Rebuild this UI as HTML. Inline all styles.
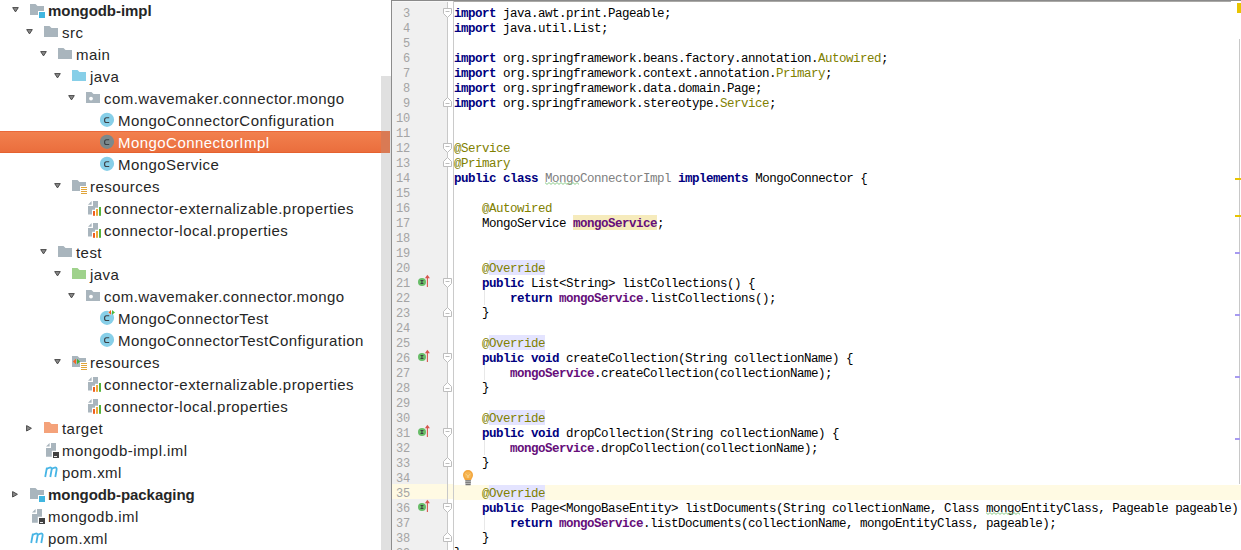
<!DOCTYPE html>
<html><head><meta charset="utf-8"><style>
html,body{margin:0;padding:0;width:1241px;height:550px;overflow:hidden;background:#fff;position:relative}
.tt{position:absolute;font-family:"Liberation Sans",sans-serif;font-size:15px;letter-spacing:0.45px;line-height:22px;height:22px;white-space:nowrap}
.sel{position:absolute;left:0;width:390px;height:22px;background:linear-gradient(#f2814f,#ea6d3c);box-shadow:inset 0 1px 0 #e9683a, inset 0 -1px 0 #e5622f}
.sb{position:absolute;left:381px;top:76px;width:10px;height:474px;background:#e0e0e0}
.sbsel{position:absolute;left:381px;top:131px;width:9px;height:22px;background:#d97a54}
.vsep{position:absolute;left:391px;top:0;width:1px;height:550px;background:#8c8c8c}
.gut{position:absolute;left:392px;top:0;width:55px;height:550px;background:#f0f0f0}
.gline{position:absolute;left:447px;top:0;width:1px;height:550px;background:#c8c8c8}
.gedge{position:absolute;left:453px;top:0;width:1px;height:550px;background:#cacaca}
.topb{position:absolute;left:391px;top:0;width:850px;height:1px;background:#8a8a8a}
.topb2{position:absolute;left:454px;top:1px;width:777px;height:1px;background:#aaa9a6}
.topb3{position:absolute;left:392px;top:1px;width:61px;height:1px;background:#f8f8f8}
.ln{position:absolute;left:392px;width:18px;text-align:right;font-family:"Liberation Mono",monospace;font-size:12px;letter-spacing:-0.2px;line-height:15px;height:15px;color:#a4a4a4}
.cl{position:absolute;left:454px;white-space:pre;font-family:"Liberation Mono",monospace;font-size:12.5px;letter-spacing:-0.5px;line-height:15px;height:15px;color:#000}
.k{color:#000080;font-weight:bold}
.a{color:#808000}
.f{color:#660e7a;font-weight:bold}
.fh{}
.oh{}
.g{color:#808080}
.u{text-decoration:underline wavy #9cd39c;text-decoration-thickness:1px;text-underline-offset:1px}
.caret{position:absolute;left:454px;top:485px;width:787px;height:15px;background:#fffae3}
.caretg{position:absolute;left:392px;top:484px;width:61px;height:15px;background:#fffae3}
.guide{position:absolute;width:1px;background:#e8e8e8}
</style></head><body>
<svg style="position:absolute;left:12px;top:7px" width="8" height="7" viewBox="0 0 8 7"><path d="M0.7 0.6 H6.3 L3.5 4.9Z" fill="#8a8a8a" stroke="#4a4a4a" stroke-width="1" stroke-linejoin="round"/></svg><svg style="position:absolute;left:30px;top:4px" width="16" height="14" viewBox="0 0 16 14"><path d="M0 0 H5.5 L7.5 2 H14 V11 H0 Z" fill="#a9b5bd"/><rect x="8" y="7" width="8" height="8" fill="#fff"/><rect x="9" y="8" width="6" height="6" fill="#40b6e0"/></svg><div class="tt" style="left:48px;top:0px;color:#262626;font-weight:bold;letter-spacing:-0.05px">mongodb-impl</div><svg style="position:absolute;left:26px;top:29px" width="8" height="7" viewBox="0 0 8 7"><path d="M0.7 0.6 H6.3 L3.5 4.9Z" fill="#8a8a8a" stroke="#4a4a4a" stroke-width="1" stroke-linejoin="round"/></svg><svg style="position:absolute;left:44px;top:26px" width="16" height="14" viewBox="0 0 16 14"><path d="M0 0 H5.5 L7.5 2 H14 V11 H0 Z" fill="#a9b5bd"/></svg><div class="tt" style="left:62px;top:22px;color:#262626;font-weight:normal;">src</div><svg style="position:absolute;left:40px;top:51px" width="8" height="7" viewBox="0 0 8 7"><path d="M0.7 0.6 H6.3 L3.5 4.9Z" fill="#8a8a8a" stroke="#4a4a4a" stroke-width="1" stroke-linejoin="round"/></svg><svg style="position:absolute;left:58px;top:48px" width="16" height="14" viewBox="0 0 16 14"><path d="M0 0 H5.5 L7.5 2 H14 V11 H0 Z" fill="#a9b5bd"/></svg><div class="tt" style="left:76px;top:44px;color:#262626;font-weight:normal;">main</div><svg style="position:absolute;left:54px;top:73px" width="8" height="7" viewBox="0 0 8 7"><path d="M0.7 0.6 H6.3 L3.5 4.9Z" fill="#8a8a8a" stroke="#4a4a4a" stroke-width="1" stroke-linejoin="round"/></svg><svg style="position:absolute;left:72px;top:70px" width="16" height="14" viewBox="0 0 16 14"><path d="M0 0 H5.5 L7.5 2 H14 V11 H0 Z" fill="#87cfe8"/></svg><div class="tt" style="left:90px;top:66px;color:#262626;font-weight:normal;">java</div><svg style="position:absolute;left:68px;top:95px" width="8" height="7" viewBox="0 0 8 7"><path d="M0.7 0.6 H6.3 L3.5 4.9Z" fill="#8a8a8a" stroke="#4a4a4a" stroke-width="1" stroke-linejoin="round"/></svg><svg style="position:absolute;left:86px;top:92px" width="16" height="14" viewBox="0 0 16 14"><path d="M0 0 H5.5 L7.5 2 H14 V11 H0 Z" fill="#a9b5bd"/><circle cx="5" cy="6.6" r="1.9" fill="#fff"/></svg><div class="tt" style="left:104px;top:88px;color:#262626;font-weight:normal;">com.wavemaker.connector.mongo</div><svg style="position:absolute;left:100px;top:112px" width="16" height="16" viewBox="0 0 16 16"><circle cx="7" cy="7.8" r="7.1" fill="#87cfe8"/><path d="M9.2 5.7 H6.4 C5.1 5.7 4.6 6.3 4.6 7.8 V8.4 C4.6 9.9 5.1 10.5 6.4 10.5 H9.2" fill="none" stroke="#3a4046" stroke-width="1.15"/></svg><div class="tt" style="left:118px;top:110px;color:#262626;font-weight:normal;">MongoConnectorConfiguration</div><div class="sel" style="top:131px"></div><svg style="position:absolute;left:100px;top:134px" width="16" height="16" viewBox="0 0 16 16"><circle cx="7" cy="7.8" r="7.1" fill="#7c898c"/><path d="M9.2 5.7 H6.4 C5.1 5.7 4.6 6.3 4.6 7.8 V8.4 C4.6 9.9 5.1 10.5 6.4 10.5 H9.2" fill="none" stroke="#3a4046" stroke-width="1.15"/></svg><div class="tt" style="left:118px;top:132px;color:#fff;font-weight:normal;">MongoConnectorImpl</div><svg style="position:absolute;left:100px;top:156px" width="16" height="16" viewBox="0 0 16 16"><circle cx="7" cy="7.8" r="7.1" fill="#87cfe8"/><path d="M9.2 5.7 H6.4 C5.1 5.7 4.6 6.3 4.6 7.8 V8.4 C4.6 9.9 5.1 10.5 6.4 10.5 H9.2" fill="none" stroke="#3a4046" stroke-width="1.15"/></svg><div class="tt" style="left:118px;top:154px;color:#262626;font-weight:normal;">MongoService</div><svg style="position:absolute;left:54px;top:183px" width="8" height="7" viewBox="0 0 8 7"><path d="M0.7 0.6 H6.3 L3.5 4.9Z" fill="#8a8a8a" stroke="#4a4a4a" stroke-width="1" stroke-linejoin="round"/></svg><svg style="position:absolute;left:72px;top:180px" width="16" height="14" viewBox="0 0 16 14"><path d="M0 0 H5.5 L7.5 2 H14 V11 H0 Z" fill="#a9b5bd"/><rect x="8" y="6" width="8" height="8" fill="#fff"/><g fill="#e0a43a"><rect x="9" y="7" width="6" height="1"/><rect x="9" y="9" width="6" height="1"/><rect x="9" y="11" width="6" height="1"/><rect x="9" y="13" width="6" height="1"/></g></svg><div class="tt" style="left:90px;top:176px;color:#262626;font-weight:normal;">resources</div><svg style="position:absolute;left:86px;top:200px" width="16" height="16" viewBox="0 0 16 16"><path d="M2 4.7 L5.6 1 V4.7 Z" fill="#a9b5bd"/><path d="M7 1 H12 V7.8 H9 V9.8 H6 V14.6 H2 V6 H7 Z" fill="#a9b5bd"/><rect x="7" y="11" width="2" height="4.8" fill="#ee5e1e"/><rect x="10" y="9" width="2" height="6.8" fill="#efa939"/><rect x="13" y="7" width="2" height="8.8" fill="#55b33d"/></svg><div class="tt" style="left:104px;top:198px;color:#262626;font-weight:normal;">connector-externalizable.properties</div><svg style="position:absolute;left:86px;top:222px" width="16" height="16" viewBox="0 0 16 16"><path d="M2 4.7 L5.6 1 V4.7 Z" fill="#a9b5bd"/><path d="M7 1 H12 V7.8 H9 V9.8 H6 V14.6 H2 V6 H7 Z" fill="#a9b5bd"/><rect x="7" y="11" width="2" height="4.8" fill="#ee5e1e"/><rect x="10" y="9" width="2" height="6.8" fill="#efa939"/><rect x="13" y="7" width="2" height="8.8" fill="#55b33d"/></svg><div class="tt" style="left:104px;top:220px;color:#262626;font-weight:normal;">connector-local.properties</div><svg style="position:absolute;left:40px;top:249px" width="8" height="7" viewBox="0 0 8 7"><path d="M0.7 0.6 H6.3 L3.5 4.9Z" fill="#8a8a8a" stroke="#4a4a4a" stroke-width="1" stroke-linejoin="round"/></svg><svg style="position:absolute;left:58px;top:246px" width="16" height="14" viewBox="0 0 16 14"><path d="M0 0 H5.5 L7.5 2 H14 V11 H0 Z" fill="#a9b5bd"/></svg><div class="tt" style="left:76px;top:242px;color:#262626;font-weight:normal;">test</div><svg style="position:absolute;left:54px;top:271px" width="8" height="7" viewBox="0 0 8 7"><path d="M0.7 0.6 H6.3 L3.5 4.9Z" fill="#8a8a8a" stroke="#4a4a4a" stroke-width="1" stroke-linejoin="round"/></svg><svg style="position:absolute;left:72px;top:268px" width="16" height="14" viewBox="0 0 16 14"><path d="M0 0 H5.5 L7.5 2 H14 V11 H0 Z" fill="#9fd28c"/></svg><div class="tt" style="left:90px;top:264px;color:#262626;font-weight:normal;">java</div><svg style="position:absolute;left:68px;top:293px" width="8" height="7" viewBox="0 0 8 7"><path d="M0.7 0.6 H6.3 L3.5 4.9Z" fill="#8a8a8a" stroke="#4a4a4a" stroke-width="1" stroke-linejoin="round"/></svg><svg style="position:absolute;left:86px;top:290px" width="16" height="14" viewBox="0 0 16 14"><path d="M0 0 H5.5 L7.5 2 H14 V11 H0 Z" fill="#a9b5bd"/><circle cx="5" cy="6.6" r="1.9" fill="#fff"/></svg><div class="tt" style="left:104px;top:286px;color:#262626;font-weight:normal;">com.wavemaker.connector.mongo</div><svg style="position:absolute;left:100px;top:310px" width="16" height="16" viewBox="0 0 16 16"><circle cx="7" cy="7.8" r="7.1" fill="#87cfe8"/><path d="M9.2 5.7 H6.4 C5.1 5.7 4.6 6.3 4.6 7.8 V8.4 C4.6 9.9 5.1 10.5 6.4 10.5 H9.2" fill="none" stroke="#3a4046" stroke-width="1.15"/><path d="M11.3 -0.5 L7.6 2.4 L11.3 5.5Z" fill="#fff" opacity="0.7"/><path d="M11 0 L8.4 2.4 L11 4.8Z" fill="#ee5e1e"/><path d="M12 0 L15 2.4 L12 4.8Z" fill="#4db83a"/></svg><div class="tt" style="left:118px;top:308px;color:#262626;font-weight:normal;">MongoConnectorTest</div><svg style="position:absolute;left:100px;top:332px" width="16" height="16" viewBox="0 0 16 16"><circle cx="7" cy="7.8" r="7.1" fill="#87cfe8"/><path d="M9.2 5.7 H6.4 C5.1 5.7 4.6 6.3 4.6 7.8 V8.4 C4.6 9.9 5.1 10.5 6.4 10.5 H9.2" fill="none" stroke="#3a4046" stroke-width="1.15"/></svg><div class="tt" style="left:118px;top:330px;color:#262626;font-weight:normal;">MongoConnectorTestConfiguration</div><svg style="position:absolute;left:54px;top:359px" width="8" height="7" viewBox="0 0 8 7"><path d="M0.7 0.6 H6.3 L3.5 4.9Z" fill="#8a8a8a" stroke="#4a4a4a" stroke-width="1" stroke-linejoin="round"/></svg><svg style="position:absolute;left:72px;top:356px" width="16" height="14" viewBox="0 0 16 14"><path d="M0 0 H5.5 L7.5 2 H14 V11 H0 Z" fill="#a9b5bd"/><path d="M4 2.8 L0.9 5.5 L4 8.2Z" fill="#f26522"/><path d="M5 2.8 L8.1 5.5 L5 8.2Z" fill="#3cb034"/><rect x="8" y="6" width="8" height="8" fill="#fff"/><g fill="#e0a43a"><rect x="9" y="7" width="6" height="1"/><rect x="9" y="9" width="6" height="1"/><rect x="9" y="11" width="6" height="1"/><rect x="9" y="13" width="6" height="1"/></g></svg><div class="tt" style="left:90px;top:352px;color:#262626;font-weight:normal;">resources</div><svg style="position:absolute;left:86px;top:376px" width="16" height="16" viewBox="0 0 16 16"><path d="M2 4.7 L5.6 1 V4.7 Z" fill="#a9b5bd"/><path d="M7 1 H12 V7.8 H9 V9.8 H6 V14.6 H2 V6 H7 Z" fill="#a9b5bd"/><rect x="7" y="11" width="2" height="4.8" fill="#ee5e1e"/><rect x="10" y="9" width="2" height="6.8" fill="#efa939"/><rect x="13" y="7" width="2" height="8.8" fill="#55b33d"/></svg><div class="tt" style="left:104px;top:374px;color:#262626;font-weight:normal;">connector-externalizable.properties</div><svg style="position:absolute;left:86px;top:398px" width="16" height="16" viewBox="0 0 16 16"><path d="M2 4.7 L5.6 1 V4.7 Z" fill="#a9b5bd"/><path d="M7 1 H12 V7.8 H9 V9.8 H6 V14.6 H2 V6 H7 Z" fill="#a9b5bd"/><rect x="7" y="11" width="2" height="4.8" fill="#ee5e1e"/><rect x="10" y="9" width="2" height="6.8" fill="#efa939"/><rect x="13" y="7" width="2" height="8.8" fill="#55b33d"/></svg><div class="tt" style="left:104px;top:396px;color:#262626;font-weight:normal;">connector-local.properties</div><svg style="position:absolute;left:26px;top:425px" width="7" height="8" viewBox="0 0 7 8"><path d="M0.6 0.6 V6.0 L5.4 3.3Z" fill="#8a8a8a" stroke="#4a4a4a" stroke-width="1" stroke-linejoin="round"/></svg><svg style="position:absolute;left:44px;top:422px" width="16" height="14" viewBox="0 0 16 14"><path d="M0 0 H5.5 L7.5 2 H14 V11 H0 Z" fill="#f4a27a"/></svg><div class="tt" style="left:62px;top:418px;color:#262626;font-weight:normal;">target</div><svg style="position:absolute;left:44px;top:442px" width="16" height="16" viewBox="0 0 16 16"><path d="M2 4.6 L5.6 1 V4.6 Z" fill="#a9b5bd"/><path d="M7 1 H12 V8.8 H7.8 V14.8 H2 V6 H7 Z" fill="#a9b5bd"/><rect x="9" y="10" width="6" height="6" fill="#414141"/><rect x="10" y="14" width="3" height="1" fill="#e8e8e8"/></svg><div class="tt" style="left:62px;top:440px;color:#262626;font-weight:normal;">mongodb-impl.iml</div><svg style="position:absolute;left:40px;top:461px" width="22" height="22" viewBox="0 0 22 22"><path d="M5.2 16 L6.9 6.6 M6.6 8.3 C7.6 6.4 12.4 5.3 11.6 8.8 L10.3 16 M11.6 8.3 C12.6 6.4 17.4 5.3 16.6 8.8 L15.3 16" fill="none" stroke="#47b5e5" stroke-width="1.8"/></svg><div class="tt" style="left:62px;top:462px;color:#262626;font-weight:normal;">pom.xml</div><svg style="position:absolute;left:12px;top:491px" width="7" height="8" viewBox="0 0 7 8"><path d="M0.6 0.6 V6.0 L5.4 3.3Z" fill="#8a8a8a" stroke="#4a4a4a" stroke-width="1" stroke-linejoin="round"/></svg><svg style="position:absolute;left:30px;top:488px" width="16" height="14" viewBox="0 0 16 14"><path d="M0 0 H5.5 L7.5 2 H14 V11 H0 Z" fill="#a9b5bd"/><rect x="8" y="7" width="8" height="8" fill="#fff"/><rect x="9" y="8" width="6" height="6" fill="#40b6e0"/></svg><div class="tt" style="left:48px;top:484px;color:#262626;font-weight:bold;letter-spacing:-0.05px">mongodb-packaging</div><svg style="position:absolute;left:30px;top:508px" width="16" height="16" viewBox="0 0 16 16"><path d="M2 4.6 L5.6 1 V4.6 Z" fill="#a9b5bd"/><path d="M7 1 H12 V8.8 H7.8 V14.8 H2 V6 H7 Z" fill="#a9b5bd"/><rect x="9" y="10" width="6" height="6" fill="#414141"/><rect x="10" y="14" width="3" height="1" fill="#e8e8e8"/></svg><div class="tt" style="left:48px;top:506px;color:#262626;font-weight:normal;">mongodb.iml</div><svg style="position:absolute;left:26px;top:527px" width="22" height="22" viewBox="0 0 22 22"><path d="M5.2 16 L6.9 6.6 M6.6 8.3 C7.6 6.4 12.4 5.3 11.6 8.8 L10.3 16 M11.6 8.3 C12.6 6.4 17.4 5.3 16.6 8.8 L15.3 16" fill="none" stroke="#47b5e5" stroke-width="1.8"/></svg><div class="tt" style="left:48px;top:528px;color:#262626;font-weight:normal;">pom.xml</div>
<div class="sb"></div><div class="sbsel"></div>
<div class="gut"></div>
<div class="caret"></div><div class="caretg"></div>
<div class="vsep"></div>
<div class="gline"></div>
<div class="gedge"></div>
<div class="topb"></div><div class="topb2"></div><div class="topb3"></div>
<div class="ln" style="top:7px">3</div><div class="ln" style="top:22px">4</div><div class="ln" style="top:37px">5</div><div class="ln" style="top:52px">6</div><div class="ln" style="top:67px">7</div><div class="ln" style="top:82px">8</div><div class="ln" style="top:97px">9</div><div class="ln" style="top:112px">10</div><div class="ln" style="top:127px">11</div><div class="ln" style="top:142px">12</div><div class="ln" style="top:157px">13</div><div class="ln" style="top:172px">14</div><div class="ln" style="top:187px">15</div><div class="ln" style="top:202px">16</div><div class="ln" style="top:217px">17</div><div class="ln" style="top:232px">18</div><div class="ln" style="top:247px">19</div><div class="ln" style="top:262px">20</div><div class="ln" style="top:277px">21</div><div class="ln" style="top:292px">22</div><div class="ln" style="top:307px">23</div><div class="ln" style="top:322px">24</div><div class="ln" style="top:337px">25</div><div class="ln" style="top:352px">26</div><div class="ln" style="top:367px">27</div><div class="ln" style="top:382px">28</div><div class="ln" style="top:397px">29</div><div class="ln" style="top:412px">30</div><div class="ln" style="top:427px">31</div><div class="ln" style="top:442px">32</div><div class="ln" style="top:457px">33</div><div class="ln" style="top:472px">34</div><div class="ln" style="top:487px">35</div><div class="ln" style="top:502px">36</div><div class="ln" style="top:517px">37</div><div class="ln" style="top:532px">38</div><div class="ln" style="top:547px">39</div>
<svg style="position:absolute;left:443px;top:8px" width="10" height="11" viewBox="0 0 10 11"><path d="M0.5 0.5 H8.5 V5.5 L4.5 9.5 L0.5 5.5Z" fill="#fff" stroke="#bdbdbd"/><path d="M2.5 3.5 H6.5" stroke="#bdbdbd"/></svg><svg style="position:absolute;left:443px;top:143px" width="10" height="11" viewBox="0 0 10 11"><path d="M0.5 0.5 H8.5 V5.5 L4.5 9.5 L0.5 5.5Z" fill="#fff" stroke="#bdbdbd"/><path d="M2.5 3.5 H6.5" stroke="#bdbdbd"/></svg><svg style="position:absolute;left:443px;top:278px" width="10" height="11" viewBox="0 0 10 11"><path d="M0.5 0.5 H8.5 V5.5 L4.5 9.5 L0.5 5.5Z" fill="#fff" stroke="#bdbdbd"/><path d="M2.5 3.5 H6.5" stroke="#bdbdbd"/></svg><svg style="position:absolute;left:443px;top:353px" width="10" height="11" viewBox="0 0 10 11"><path d="M0.5 0.5 H8.5 V5.5 L4.5 9.5 L0.5 5.5Z" fill="#fff" stroke="#bdbdbd"/><path d="M2.5 3.5 H6.5" stroke="#bdbdbd"/></svg><svg style="position:absolute;left:443px;top:428px" width="10" height="11" viewBox="0 0 10 11"><path d="M0.5 0.5 H8.5 V5.5 L4.5 9.5 L0.5 5.5Z" fill="#fff" stroke="#bdbdbd"/><path d="M2.5 3.5 H6.5" stroke="#bdbdbd"/></svg><svg style="position:absolute;left:443px;top:503px" width="10" height="11" viewBox="0 0 10 11"><path d="M0.5 0.5 H8.5 V5.5 L4.5 9.5 L0.5 5.5Z" fill="#fff" stroke="#bdbdbd"/><path d="M2.5 3.5 H6.5" stroke="#bdbdbd"/></svg><svg style="position:absolute;left:443px;top:96px" width="10" height="12" viewBox="0 0 10 12"><path d="M0.5 10.5 H8.5 V5.5 L4.5 1.5 L0.5 5.5Z" fill="#fff" stroke="#bdbdbd"/><path d="M2.5 7.5 H6.5" stroke="#bdbdbd"/></svg><svg style="position:absolute;left:443px;top:156px" width="10" height="12" viewBox="0 0 10 12"><path d="M0.5 10.5 H8.5 V5.5 L4.5 1.5 L0.5 5.5Z" fill="#fff" stroke="#bdbdbd"/><path d="M2.5 7.5 H6.5" stroke="#bdbdbd"/></svg><svg style="position:absolute;left:443px;top:306px" width="10" height="12" viewBox="0 0 10 12"><path d="M0.5 10.5 H8.5 V5.5 L4.5 1.5 L0.5 5.5Z" fill="#fff" stroke="#bdbdbd"/><path d="M2.5 7.5 H6.5" stroke="#bdbdbd"/></svg><svg style="position:absolute;left:443px;top:381px" width="10" height="12" viewBox="0 0 10 12"><path d="M0.5 10.5 H8.5 V5.5 L4.5 1.5 L0.5 5.5Z" fill="#fff" stroke="#bdbdbd"/><path d="M2.5 7.5 H6.5" stroke="#bdbdbd"/></svg><svg style="position:absolute;left:443px;top:456px" width="10" height="12" viewBox="0 0 10 12"><path d="M0.5 10.5 H8.5 V5.5 L4.5 1.5 L0.5 5.5Z" fill="#fff" stroke="#bdbdbd"/><path d="M2.5 7.5 H6.5" stroke="#bdbdbd"/></svg><svg style="position:absolute;left:443px;top:531px" width="10" height="12" viewBox="0 0 10 12"><path d="M0.5 10.5 H8.5 V5.5 L4.5 1.5 L0.5 5.5Z" fill="#fff" stroke="#bdbdbd"/><path d="M2.5 7.5 H6.5" stroke="#bdbdbd"/></svg>
<svg style="position:absolute;left:417px;top:274px" width="16" height="16" viewBox="0 0 16 16"><circle cx="5" cy="8" r="4" fill="#68bd68"/><rect x="4.4" y="6" width="1.1" height="4" fill="#3f3f3f"/><rect x="3.5" y="6" width="2.9" height="0.9" fill="#3f3f3f"/><rect x="3.5" y="9.1" width="2.9" height="0.9" fill="#3f3f3f"/><path d="M10.4 13 V3.5" stroke="#d6564e" stroke-width="1.1"/><path d="M7.9 4.3 L10.4 0.8 L12.9 4.3 Z" fill="#d6564e"/></svg><svg style="position:absolute;left:417px;top:349px" width="16" height="16" viewBox="0 0 16 16"><circle cx="5" cy="8" r="4" fill="#68bd68"/><rect x="4.4" y="6" width="1.1" height="4" fill="#3f3f3f"/><rect x="3.5" y="6" width="2.9" height="0.9" fill="#3f3f3f"/><rect x="3.5" y="9.1" width="2.9" height="0.9" fill="#3f3f3f"/><path d="M10.4 13 V3.5" stroke="#d6564e" stroke-width="1.1"/><path d="M7.9 4.3 L10.4 0.8 L12.9 4.3 Z" fill="#d6564e"/></svg><svg style="position:absolute;left:417px;top:424px" width="16" height="16" viewBox="0 0 16 16"><circle cx="5" cy="8" r="4" fill="#68bd68"/><rect x="4.4" y="6" width="1.1" height="4" fill="#3f3f3f"/><rect x="3.5" y="6" width="2.9" height="0.9" fill="#3f3f3f"/><rect x="3.5" y="9.1" width="2.9" height="0.9" fill="#3f3f3f"/><path d="M10.4 13 V3.5" stroke="#d6564e" stroke-width="1.1"/><path d="M7.9 4.3 L10.4 0.8 L12.9 4.3 Z" fill="#d6564e"/></svg><svg style="position:absolute;left:417px;top:499px" width="16" height="16" viewBox="0 0 16 16"><circle cx="5" cy="8" r="4" fill="#68bd68"/><rect x="4.4" y="6" width="1.1" height="4" fill="#3f3f3f"/><rect x="3.5" y="6" width="2.9" height="0.9" fill="#3f3f3f"/><rect x="3.5" y="9.1" width="2.9" height="0.9" fill="#3f3f3f"/><path d="M10.4 13 V3.5" stroke="#d6564e" stroke-width="1.1"/><path d="M7.9 4.3 L10.4 0.8 L12.9 4.3 Z" fill="#d6564e"/></svg>
<div class="guide" style="left:484px;top:290px;height:15px"></div>
<div class="guide" style="left:484px;top:365px;height:15px"></div>
<div class="guide" style="left:484px;top:440px;height:15px"></div>
<div class="guide" style="left:484px;top:515px;height:15px"></div>
<div style="position:absolute;left:573px;top:215px;width:84px;height:15px;background:#f6ebbc"></div><div style="position:absolute;left:489px;top:260px;width:56px;height:15px;background:#e4e4ff"></div><div style="position:absolute;left:489px;top:335px;width:56px;height:15px;background:#e4e4ff"></div><div style="position:absolute;left:489px;top:410px;width:56px;height:15px;background:#e4e4ff"></div><div style="position:absolute;left:489px;top:485px;width:56px;height:15px;background:#e4e4ff"></div>
<div class="cl" style="top:7px"><b class="k">import</b> java.awt.print.Pageable;</div><div class="cl" style="top:22px"><b class="k">import</b> java.util.List;</div><div class="cl" style="top:37px"></div><div class="cl" style="top:52px"><b class="k">import</b> org.springframework.beans.factory.annotation.<span class="a">Autowired</span>;</div><div class="cl" style="top:67px"><b class="k">import</b> org.springframework.context.annotation.<span class="a">Primary</span>;</div><div class="cl" style="top:82px"><b class="k">import</b> org.springframework.data.domain.Page;</div><div class="cl" style="top:97px"><b class="k">import</b> org.springframework.stereotype.<span class="a">Service</span>;</div><div class="cl" style="top:112px"></div><div class="cl" style="top:127px"></div><div class="cl" style="top:142px"><span class="a">@Service</span></div><div class="cl" style="top:157px"><span class="a">@Primary</span></div><div class="cl" style="top:172px"><b class="k">public</b> <b class="k">class</b> <span class="g">MongoConnectorImpl</span> <b class="k">implements</b> MongoConnector {</div><div class="cl" style="top:187px"></div><div class="cl" style="top:202px">    <span class="a">@Autowired</span></div><div class="cl" style="top:217px">    MongoService <b class="f fh">mongoService</b>;</div><div class="cl" style="top:232px"></div><div class="cl" style="top:247px"></div><div class="cl" style="top:262px">    <span class="a">@<span class="oh">Override</span></span></div><div class="cl" style="top:277px">    <b class="k">public</b> List&lt;String&gt; listCollections() {</div><div class="cl" style="top:292px">        <b class="k">return</b> <b class="f">mongoService</b>.listCollections();</div><div class="cl" style="top:307px">    <span style="position:relative;top:-1px">}</span></div><div class="cl" style="top:322px"></div><div class="cl" style="top:337px">    <span class="a">@<span class="oh">Override</span></span></div><div class="cl" style="top:352px">    <b class="k">public</b> <b class="k">void</b> createCollection(String collectionName) {</div><div class="cl" style="top:367px">        <b class="f">mongoService</b>.createCollection(collectionName);</div><div class="cl" style="top:382px">    <span style="position:relative;top:-1px">}</span></div><div class="cl" style="top:397px"></div><div class="cl" style="top:412px">    <span class="a">@<span class="oh">Override</span></span></div><div class="cl" style="top:427px">    <b class="k">public</b> <b class="k">void</b> dropCollection(String collectionName) {</div><div class="cl" style="top:442px">        <b class="f">mongoService</b>.dropCollection(collectionName);</div><div class="cl" style="top:457px">    <span style="position:relative;top:-1px">}</span></div><div class="cl" style="top:472px"></div><div class="cl" style="top:487px">    <span class="a">@<span class="oh">Override</span></span></div><div class="cl" style="top:502px">    <b class="k">public</b> Page&lt;MongoBaseEntity&gt; listDocuments(String collectionName, Class mongoEntityClass, Pageable pageable) {</div><div class="cl" style="top:517px">        <b class="k">return</b> <b class="f">mongoService</b>.listDocuments(collectionName, mongoEntityClass, pageable);</div><div class="cl" style="top:532px">    <span style="position:relative;top:-1px">}</span></div><div class="cl" style="top:547px"><span style="position:relative;top:-1px">}</span></div>
<svg style="position:absolute;left:545px;top:182px" width="35" height="3" viewBox="0 0 35 3"><polyline points="0.0,0.6 2.0,2.4 4.0,0.6 6.0,2.4 8.0,0.6 10.0,2.4 12.0,0.6 14.0,2.4 16.0,0.6 18.0,2.4 20.0,0.6 22.0,2.4 24.0,0.6 26.0,2.4 28.0,0.6 30.0,2.4 32.0,0.6 34.0,2.4" fill="none" stroke="#8ccb8c" stroke-width="1"/></svg><svg style="position:absolute;left:986px;top:512px" width="35" height="3" viewBox="0 0 35 3"><polyline points="0.0,0.6 2.0,2.4 4.0,0.6 6.0,2.4 8.0,0.6 10.0,2.4 12.0,0.6 14.0,2.4 16.0,0.6 18.0,2.4 20.0,0.6 22.0,2.4 24.0,0.6 26.0,2.4 28.0,0.6 30.0,2.4 32.0,0.6 34.0,2.4" fill="none" stroke="#8ccb8c" stroke-width="1"/></svg>
<svg style="position:absolute;left:462px;top:469px" width="12" height="17" viewBox="0 0 12 17"><path d="M1 6 A5 5 0 1 1 11 6 C11 8.2 9.6 9.4 9.2 11 H2.8 C2.4 9.4 1 8.2 1 6Z" fill="#f3a53c"/><circle cx="6" cy="6" r="3.6" fill="#f6b552"/><path d="M3.6 5 L4.6 5.6 M8.4 5 L7.4 5.6 M5 6.2 L6 7.4 L7 6.2 M6 7.4 V9" stroke="#fde3a8" stroke-width="0.8" fill="none"/><rect x="3.3" y="11" width="5.6" height="5.2" fill="#d5d5d5"/><rect x="3.3" y="11.3" width="5.6" height="1.1" fill="#6a6a6a"/><rect x="3.3" y="13.2" width="5.6" height="1.1" fill="#6a6a6a"/><rect x="3.6" y="15.1" width="5" height="1.1" fill="#6a6a6a"/></svg>

<div style="position:absolute;left:1237px;top:3px;width:4px;height:10px;background:#e8c400"></div>
<div style="position:absolute;left:1239px;top:39px;width:1px;height:445px;background:#c8c8c8"></div><div style="position:absolute;left:1235px;top:252px;width:5px;height:2px;background:#a79af0"></div><div style="position:absolute;left:1235px;top:314px;width:5px;height:2px;background:#a79af0"></div><div style="position:absolute;left:1235px;top:376px;width:5px;height:2px;background:#a79af0"></div><div style="position:absolute;left:1235px;top:438px;width:5px;height:2px;background:#a79af0"></div>
<div style="position:absolute;left:1235px;top:178px;width:6px;height:2px;background:#e8c400"></div>
<div style="position:absolute;left:1235px;top:215px;width:6px;height:2px;background:#e8c400"></div>
</body></html>
